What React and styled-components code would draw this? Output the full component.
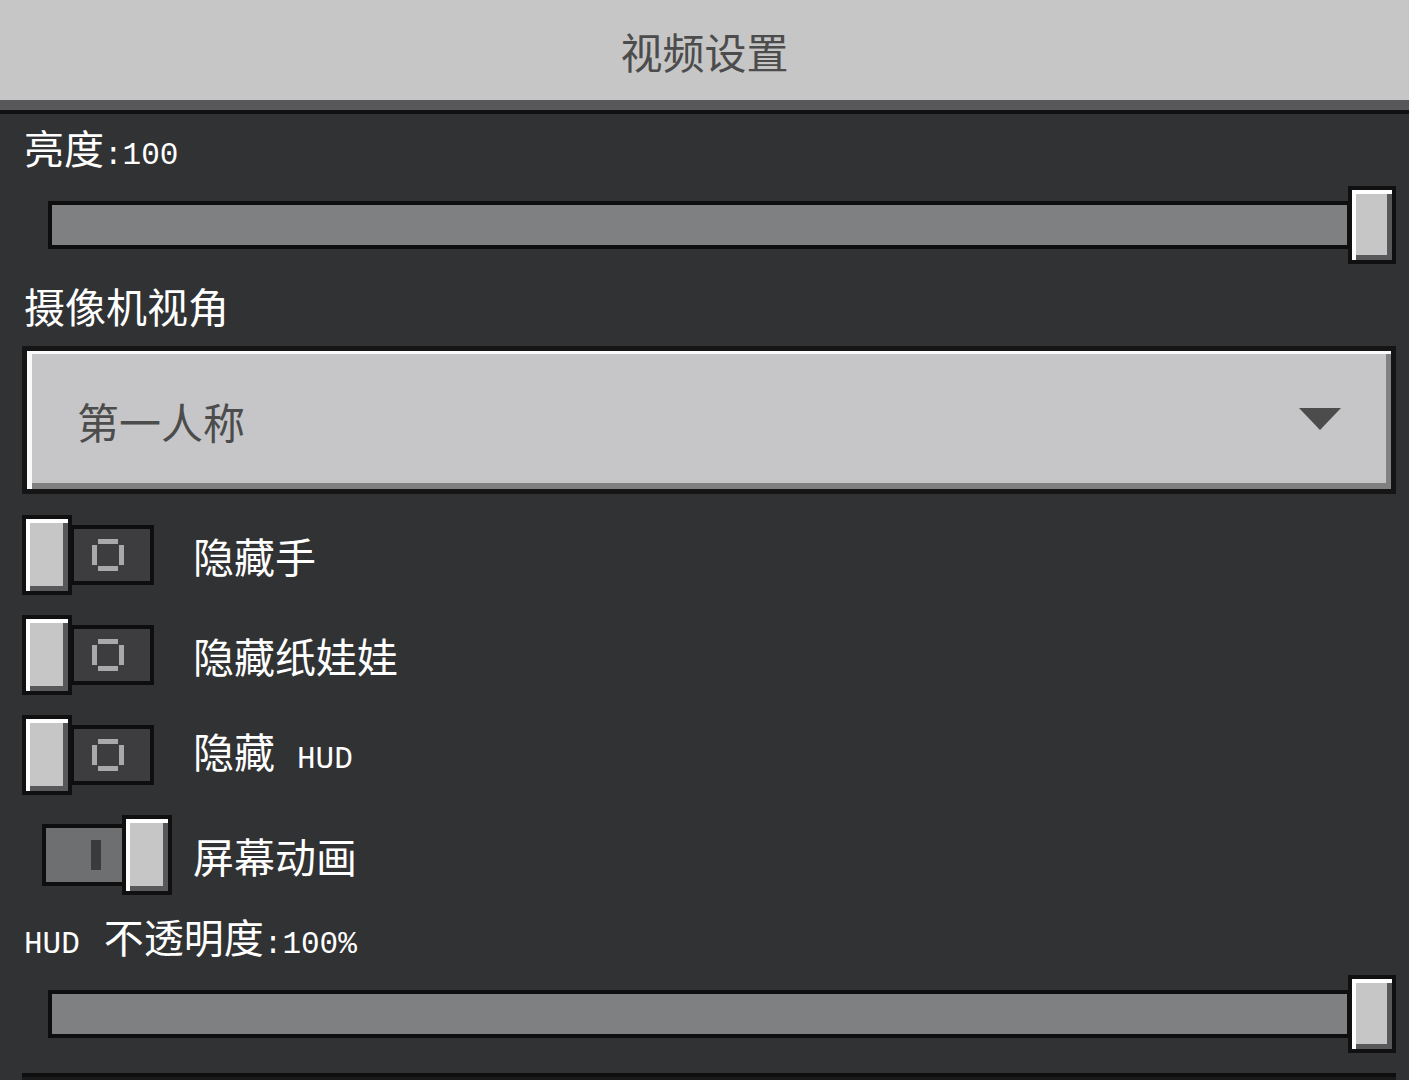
import styled, { createGlobalStyle } from 'styled-components';

const GlobalStyle = createGlobalStyle`
  html, body {
    margin: 0;
    padding: 0;
    height: 100%;
    overflow: hidden;
    background: #313233;
  }
  body {
    font-family: "Noto Sans CJK SC", "Liberation Mono", sans-serif;
  }
`;

function ToggleIcon({ on }) {
  if (on) {
    return (
      <svg width="12" height="32" viewBox="0 0 12 32">
        <rect x="1" y="1" width="10" height="30" fill="#3b3b3d" />
      </svg>
    );
  }
  return (
    <svg width="32" height="32" viewBox="0 0 32 32">
      <g fill="#a9a9aa">
        <rect x="6" y="0" width="20" height="5" />
        <rect x="6" y="27" width="20" height="5" />
        <rect x="0" y="6" width="5" height="20" />
        <rect x="27" y="6" width="5" height="20" />
      </g>
    </svg>
  );
}

function Toggle({ on, label }) {
  return (
    <ToggleRow>
      <ToggleWrap $on={on}>
        <Knob $size="toggle" />
        <Track $on={on}>
          <ToggleIcon on={on} />
        </Track>
      </ToggleWrap>
      <RowLabel>{label}</RowLabel>
    </ToggleRow>
  );
}

function Slider() {
  return (
    <SliderRow>
      <SliderTrack />
      <Knob $size="slider" />
    </SliderRow>
  );
}

export default function App() {
  return (
    <>
      <GlobalStyle />
      <Page>
        <Header>视频设置</Header>
        <Body>
          <Label>亮度<Latin>:100</Latin></Label>
          <Slider />
          <Label $big>摄像机视角</Label>
          <Dropdown>
            <span>第一人称</span>
            <svg width="42" height="24" viewBox="0 0 42 24">
              <polygon points="0,0 42,0 21,22" fill="#4c4c4c" />
            </svg>
          </Dropdown>
          <ToggleList>
            <Toggle label="隐藏手" />
            <Toggle label="隐藏纸娃娃" />
            <Toggle label={<>隐藏<Latin $gap>HUD</Latin></>} />
            <Toggle on label="屏幕动画" />
          </ToggleList>
          <Label $gapTop><Latin>HUD</Latin><Gap />不透明度<Latin>:100%</Latin></Label>
          <Slider />
          <NextBox />
        </Body>
      </Page>
    </>
  );
}

const Page = styled.div`
  height: 100vh;
  display: flex;
  flex-direction: column;
  background: #313233;
  overflow: hidden;
`;

const Header = styled.div`
  height: 100px;
  flex-shrink: 0;
  display: flex;
  align-items: center;
  justify-content: center;
  background: #c6c6c6;
  color: #4c4c4c;
  font-size: 42px;
  border-bottom: 10px solid #58585a;
  box-shadow: 0 4px 0 #111;
`;

const Body = styled.div`
  display: flex;
  flex-direction: column;
  padding: 9px 13px 0 22px;
  margin-top: 4px;
`;

const Label = styled.div`
  color: #ffffff;
  font-size: ${(p) => (p.$big ? '41px' : '40px')};
  line-height: 48px;
  padding-left: 2px;
  margin-top: ${(p) => (p.$gapTop ? '7px' : '0')};
`;

const Latin = styled.span`
  font-family: "Liberation Mono", monospace;
  font-size: 31px;
  margin-left: ${(p) => (p.$gap ? '22px' : '0')};
`;

const Gap = styled.span`
  display: inline-block;
  width: 24px;
`;

const SliderRow = styled.div`
  display: flex;
  align-items: center;
  height: 78px;
  margin-top: 6px;
  padding-left: 26px;
  margin-bottom: 17px;
`;

const SliderTrack = styled.div`
  flex: 1;
  height: 48px;
  box-sizing: border-box;
  border: 4px solid #0e0e0e;
  background: #7e8081;
`;

const Knob = styled.div`
  flex-shrink: 0;
  box-sizing: border-box;
  width: ${(p) => (p.$size === 'slider' ? '48px' : '50px')};
  height: ${(p) => (p.$size === 'slider' ? '78px' : '80px')};
  margin-left: ${(p) => (p.$size === 'slider' ? '-3px' : '0')};
  border: 4px solid #101010;
  background: #c6c6c6;
  box-shadow: inset 4px 4px 0 #ffffff, inset -5px -5px 0 #58585a;
  position: relative;
  z-index: 1;
`;

const Dropdown = styled.div`
  height: 148px;
  box-sizing: border-box;
  margin-top: 17px;
  border: 5px solid #151515;
  background: #c6c6c8;
  box-shadow: inset 5px 3px 0 #fafafa, inset -5px -6px 0 #808081;
  display: flex;
  align-items: center;
  justify-content: space-between;
  padding: 0 50px 0 50px;
  color: #4c4c4c;
  font-size: 42px;
`;

const ToggleList = styled.div`
  display: flex;
  flex-direction: column;
  margin-top: 11px;
`;

const ToggleRow = styled.div`
  height: 100px;
  display: flex;
  align-items: center;
  gap: 21px;
`;

const ToggleWrap = styled.div`
  width: 150px;
  display: flex;
  align-items: center;
  flex-direction: ${(p) => (p.$on ? 'row-reverse' : 'row')};
  justify-content: flex-start;
  padding-left: ${(p) => (p.$on ? '20px' : '0')};
  box-sizing: border-box;
`;

const Track = styled.div`
  box-sizing: border-box;
  width: 84px;
  height: ${(p) => (p.$on ? '62px' : '60px')};
  margin-left: ${(p) => (p.$on ? '0' : '-2px')};
  margin-right: ${(p) => (p.$on ? '-4px' : '0')};
  border: 4px solid #0e0e0e;
  background: ${(p) => (p.$on ? '#6e6f71' : '#3d3d3f')};
  display: flex;
  align-items: center;
  justify-content: center;
  padding-left: ${(p) => (p.$on ? '24px' : '0')};
  padding-right: ${(p) => (p.$on ? '0' : '8px')};
`;

const RowLabel = styled.div`
  color: #ffffff;
  font-size: 41px;
  line-height: 48px;
`;

const NextBox = styled.div`
  margin-top: 3px;
  height: 40px;
  border-top: 4px solid #0e0e0e;
  background: #1a1a1a;
`;
